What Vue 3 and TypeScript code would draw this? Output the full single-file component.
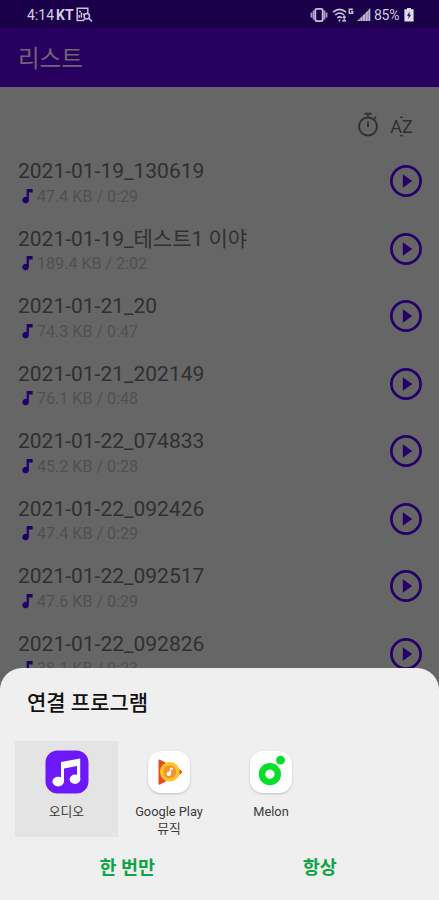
<script setup lang="ts">
interface Recording {
  name: string
  size: string
  length: string
}

const recordings: Recording[] = [
  { name: '2021-01-19_130619', size: '47.4 KB', length: '0:29' },
  { name: '2021-01-19_테스트1 이야', size: '189.4 KB', length: '2:02' },
  { name: '2021-01-21_20', size: '74.3 KB', length: '0:47' },
  { name: '2021-01-21_202149', size: '76.1 KB', length: '0:48' },
  { name: '2021-01-22_074833', size: '45.2 KB', length: '0:28' },
  { name: '2021-01-22_092426', size: '47.4 KB', length: '0:29' },
  { name: '2021-01-22_092517', size: '47.6 KB', length: '0:29' },
  { name: '2021-01-22_092826', size: '38.1 KB', length: '0:23' },
]
</script>

<template>
  <div class="screen">
    <header class="status">
      <span class="clock">4:14</span>
      <span class="carrier">KT</span>
      <svg class="capture" viewBox="0 0 17 16" fill="none" stroke="#c9c1dc" stroke-width="1.5">
        <path d="M8 13.5H1.2V1.2H11.8V6" />
        <path d="M3.2 10.8V8M5.4 10.8V5.5M7.6 8V6.5M3 4.4H5" />
        <circle cx="10.8" cy="9.3" r="2.7" />
        <path d="M12.8 11.3L16 14.6M7 13.5L9 12" />
      </svg>
      <span class="spacer"></span>
      <svg class="vibrate" viewBox="0 0 18 16">
        <rect x="5.3" y="1.8" width="7.4" height="12.4" rx="1.6" fill="none" stroke="#c9c1dc" stroke-width="1.8" />
        <path d="M3.6 3.4V12.6M14.4 3.4V12.6" stroke="#aaa0c2" stroke-width="1.8" />
        <path d="M1.5 5.5V10.5M16.5 5.5V10.5" stroke="#aaa0c2" stroke-width="1.8" />
      </svg>
      <svg class="wifi" viewBox="0 0 22 16" fill="none" stroke="#c9c1dc" stroke-width="1.6">
        <path d="M1 5.2Q7.5 -.6 14 5.2M3.2 8Q7.5 4 12 8M5.3 10.8Q7.5 8.8 9.8 10.8" />
        <path d="M7.5 12.5V14.5M10.2 13.8H14" />
        <path d="M12.2 9V14M10.6 11L12.2 9L13.8 11" stroke-width="1.2" />
        <path d="M20.8 2.2H17.3V6.3H20.6V4.4H19" stroke-width="1.4" />
      </svg>
      <svg class="signal" viewBox="0 0 14 14" fill="#bdb4d0">
        <path d="M0 13L2.9 10.4V13ZM3.2 13V9.9L5.7 7.8V13ZM6 13V7.2L8.4 5.2V13ZM8.7 13V4.6L10.9 2.7V13ZM11.2 13V2.1L13.3 0V13Z" />
      </svg>
      <span class="percent">85%</span>
      <svg class="battery" viewBox="0 0 10 14">
        <path d="M3 0H7V1.2H9.6V13.5H.4V1.2H3Z" fill="#e1dcec" />
        <path d="M5.8 3.6L3 7.8H4.7L4.3 11L7 6.7H5.2Z" fill="#1a0048" />
      </svg>
    </header>

    <div class="appbar">리스트</div>

    <main class="content">
      <div class="tools">
        <svg class="timer" viewBox="0 0 22 26" fill="none" stroke="#303030" stroke-width="1.9">
          <circle cx="11" cy="14.5" r="9" />
          <path d="M7.5 1.8H14.5M11 9.8V15M17.3 6.5L19 4.9" />
          <path d="M11 3V5.5" stroke-width="1.4" />
        </svg>
        <span class="sort">
          <svg class="caret" viewBox="0 0 6 3"><path d="M0 3L3 0L6 3Z" /></svg>
          <span class="az">AZ</span>
          <svg class="caret" viewBox="0 0 6 3"><path d="M0 0L3 3L6 0Z" /></svg>
        </span>
      </div>

      <ul class="list">
        <li v-for="item in recordings" :key="item.name" class="row">
          <div class="info">
            <div class="name">{{ item.name }}</div>
            <div class="meta">
              <svg class="note" viewBox="0 0 11 16" fill="#21006b">
                <path d="M4.6 0H11V3.6H7V11.8A3.5 3.5 0 1 1 4.6 8.5Z" />
              </svg>
              <span>{{ item.size }} / {{ item.length }}</span>
            </div>
          </div>
          <svg class="play" viewBox="0 0 32 32">
            <circle cx="16" cy="16" r="14.6" fill="none" stroke="#25006a" stroke-width="2.7" />
            <path d="M12.8 9.3L22.2 16L12.8 22.7Z" fill="#25006a" />
          </svg>
        </li>
      </ul>
    </main>

    <section class="sheet">
      <h2 class="heading">연결 프로그램</h2>
      <div class="apps">
        <div class="app selected">
          <svg class="icon" viewBox="0 0 44 44">
            <rect x=".5" y=".5" width="43" height="43" rx="12" fill="#6d18fa" />
            <path d="M16 12.1L35.2 8.5V29H32V16L19 18.4V31H16Z" fill="#fff" />
            <ellipse cx="13.2" cy="31.6" rx="5.8" ry="4.8" fill="#fff" />
            <ellipse cx="30" cy="29.2" rx="5.3" ry="4.7" fill="#fff" />
          </svg>
          <span class="label">오디오</span>
        </div>
        <div class="app">
          <svg class="icon lifted" viewBox="0 0 44 44">
            <rect x="1" y="1" width="42" height="42" rx="13" fill="#fff" />
            <path d="M11.5 10.5Q11.5 8.8 13 9.7L34 20.4Q36 22 34 23.4L13 34.5Q11.5 35.2 11.5 33.6Z" fill="#e94c24" />
            <path d="M26 16.3L34 20.4Q36 22 34 23.4L26 27.6Z" fill="#dc6525" />
            <circle cx="22.8" cy="21.8" r="9.8" fill="#ffc526" />
            <circle cx="22.8" cy="21.8" r="6.5" fill="#f6922b" />
            <path d="M22.8 17.8H26V19.6H24.1V23.7A2.2 2.2 0 1 1 22.8 21.8Z" fill="#fff" />
          </svg>
          <span class="label">Google Play<br />뮤직</span>
        </div>
        <div class="app">
          <svg class="icon lifted" viewBox="0 0 44 44">
            <rect x="1" y="1" width="42" height="42" rx="13" fill="#fff" />
            <circle cx="20.9" cy="24.2" r="7.9" fill="none" stroke="#08df2b" stroke-width="6.4" />
            <circle cx="31.5" cy="10.2" r="4.4" fill="#08df2b" />
          </svg>
          <span class="label">Melon</span>
        </div>
      </div>
      <div class="actions">
        <button class="action" type="button">한 번만</button>
        <button class="action" type="button">항상</button>
      </div>
    </section>
  </div>
</template>

<style>
body {
  background: #666;
}
</style>

<style scoped>
.screen {
  position: relative;
  width: 439px;
  height: 900px;
  overflow: hidden;
  background: #666;
  font-family: Roboto, "Noto Sans CJK KR", sans-serif;
}
.status {
  display: flex;
  align-items: center;
  height: 28px;
  padding: 1px 25px 0 27px;
  box-sizing: border-box;
  background: #1a0048;
  color: #d2cbe0;
  font-size: 14px;
  line-height: 16px;
}
.clock { width: 29px; }
.carrier { width: 20px; font-weight: 700; }
.capture { width: 17px; height: 16px; }
.spacer { flex: 1; }
.vibrate { width: 18px; height: 16px; margin-right: 4px; }
.wifi { width: 22px; height: 16px; margin-right: 3px; }
.signal { width: 14px; height: 14px; margin-right: 3px; }
.percent { width: 30px; letter-spacing: -0.3px; }
.battery { width: 10px; height: 14px; }
.appbar {
  display: flex;
  align-items: center;
  height: 59px;
  padding: 0 0 1px 18px;
  box-sizing: border-box;
  background: #270060;
  color: #716475;
  font-size: 23.5px;
}
.tools {
  display: flex;
  justify-content: flex-end;
  align-items: center;
  gap: 11px;
  height: 60.3px;
  padding: 18px 26px 0 0;
  box-sizing: border-box;
}
.timer { width: 22px; height: 26px; margin-top: -2px; }
.sort {
  display: flex;
  flex-direction: column;
  align-items: center;
  width: 23px;
  color: #303030;
}
.az { font-size: 18px; line-height: 17px; }
.caret { width: 5px; height: 2px; fill: #303030; }
.list { margin: 0; padding: 0; list-style: none; }
.row {
  display: flex;
  justify-content: space-between;
  align-items: center;
  height: 67.5px;
  padding: 0 18px;
  box-sizing: border-box;
}
.info { padding-top: 3px; }
.name {
  height: 27px;
  color: #303030;
  font-size: 21px;
  line-height: 27px;
  white-space: nowrap;
}
.meta {
  display: flex;
  align-items: center;
  height: 22px;
  padding-left: 4px;
  color: #505050;
  font-size: 16.1px;
  line-height: 23px;
}
.note { width: 11px; height: 15px; margin-right: 4px; }
.play { width: 32px; height: 32px; margin-right: -1px; }
.sheet {
  position: absolute;
  left: 0;
  right: 0;
  bottom: 0;
  height: 232px;
  border-radius: 22px 22px 0 0;
  background: #efefef;
}
.heading {
  height: 73px;
  margin: 0;
  padding: 20px 0 0 27px;
  box-sizing: border-box;
  color: #111;
  font-size: 21px;
  font-weight: 500;
  line-height: 30px;
}
.apps { display: flex; height: 96px; padding-left: 15px; }
.app {
  display: flex;
  flex-direction: column;
  align-items: center;
  width: 102px;
  padding-top: 9px;
  box-sizing: border-box;
}
.selected { width: 103px; background: #e4e4e4; }
.icon { width: 44px; height: 44px; }
.lifted { filter: drop-shadow(0 1px 1px rgba(0, 0, 0, 0.2)); }
.label {
  margin-top: 9px;
  color: #3b3b3b;
  font-size: 12.8px;
  line-height: 17px;
  text-align: center;
  white-space: nowrap;
}
.actions { display: flex; padding: 14px 23px 0 31px; }
.action {
  flex: 1;
  height: 34px;
  padding: 0;
  border: 0;
  background: none;
  color: #10a446;
  font: 700 18.5px/34px Roboto, "Noto Sans CJK KR", sans-serif;
}
</style>
